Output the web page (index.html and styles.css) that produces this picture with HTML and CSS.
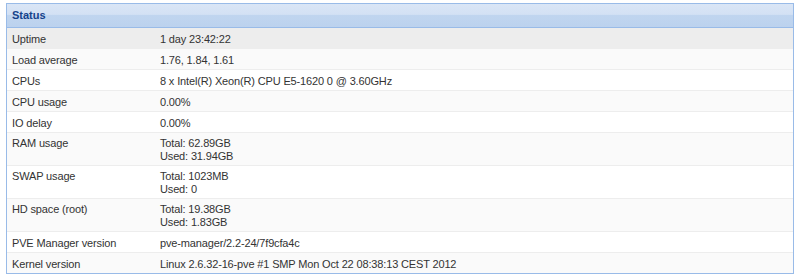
FILE: index.html
```html
<!DOCTYPE html>
<html>
<head>
<meta charset="utf-8">
<link rel="stylesheet" href="styles.css">
</head>
<body>
<div class="panel">
  <div class="panel-header">Status</div>
  <table class="grid">
    <tr class="row selected"><td class="key">Uptime</td><td class="val">1 day 23:42:22</td></tr>
    <tr class="row alt"><td class="key">Load average</td><td class="val">1.76, 1.84, 1.61</td></tr>
    <tr class="row"><td class="key">CPUs</td><td class="val">8 x Intel(R) Xeon(R) CPU E5-1620 0 @ 3.60GHz</td></tr>
    <tr class="row alt"><td class="key">CPU usage</td><td class="val">0.00%</td></tr>
    <tr class="row"><td class="key">IO delay</td><td class="val">0.00%</td></tr>
    <tr class="row alt multi"><td class="key">RAM usage</td><td class="val">Total: 62.89GB<br>Used: 31.94GB</td></tr>
    <tr class="row multi"><td class="key">SWAP usage</td><td class="val">Total: 1023MB<br>Used: 0</td></tr>
    <tr class="row alt multi"><td class="key">HD space (root)</td><td class="val">Total: 19.38GB<br>Used: 1.83GB</td></tr>
    <tr class="row"><td class="key">PVE Manager version</td><td class="val">pve-manager/2.2-24/7f9cfa4c</td></tr>
    <tr class="row alt last"><td class="key">Kernel version</td><td class="val">Linux 2.6.32-16-pve #1 SMP Mon Oct 22 08:38:13 CEST 2012</td></tr>
  </table>
</div>
</body>
</html>
```

FILE: styles.css
```css
html, body {
  margin: 0;
  padding: 0;
  background: #ffffff;
}

body {
  padding: 3px 6px 0 6px;
  font-family: "Liberation Sans", Arial, sans-serif;
  font-size: 11px;
  color: #333333;
}

.panel {
  width: 786px;
  border: 1px solid #99bbe8;
}

.panel-header {
  height: 23px;
  line-height: 22px;
  padding-left: 5px;
  font-weight: bold;
  color: #15428b;
  background: linear-gradient(#dae6f6 0%, #d3e1f4 45%, #c0d5ef 50%, #bcd2ee 100%);
  border-bottom: 1px solid #99bbe8;
}

.grid {
  width: 100%;
  border-collapse: collapse;
  border-spacing: 0;
}

.row td {
  padding: 4px 5px 2px 5px;
  line-height: 14px;
  letter-spacing: -0.15px;
  border-bottom: 1px solid #ededed;
  vertical-align: top;
  white-space: nowrap;
}

.row.multi td {
  line-height: 13px;
}

.row.last td {
  border-bottom: none;
}

.row {
  background: #ffffff;
}

.row.alt {
  background: #fafafa;
}

.row.selected {
  background: #ededed;
}

.key {
  width: 138px;
}
```
